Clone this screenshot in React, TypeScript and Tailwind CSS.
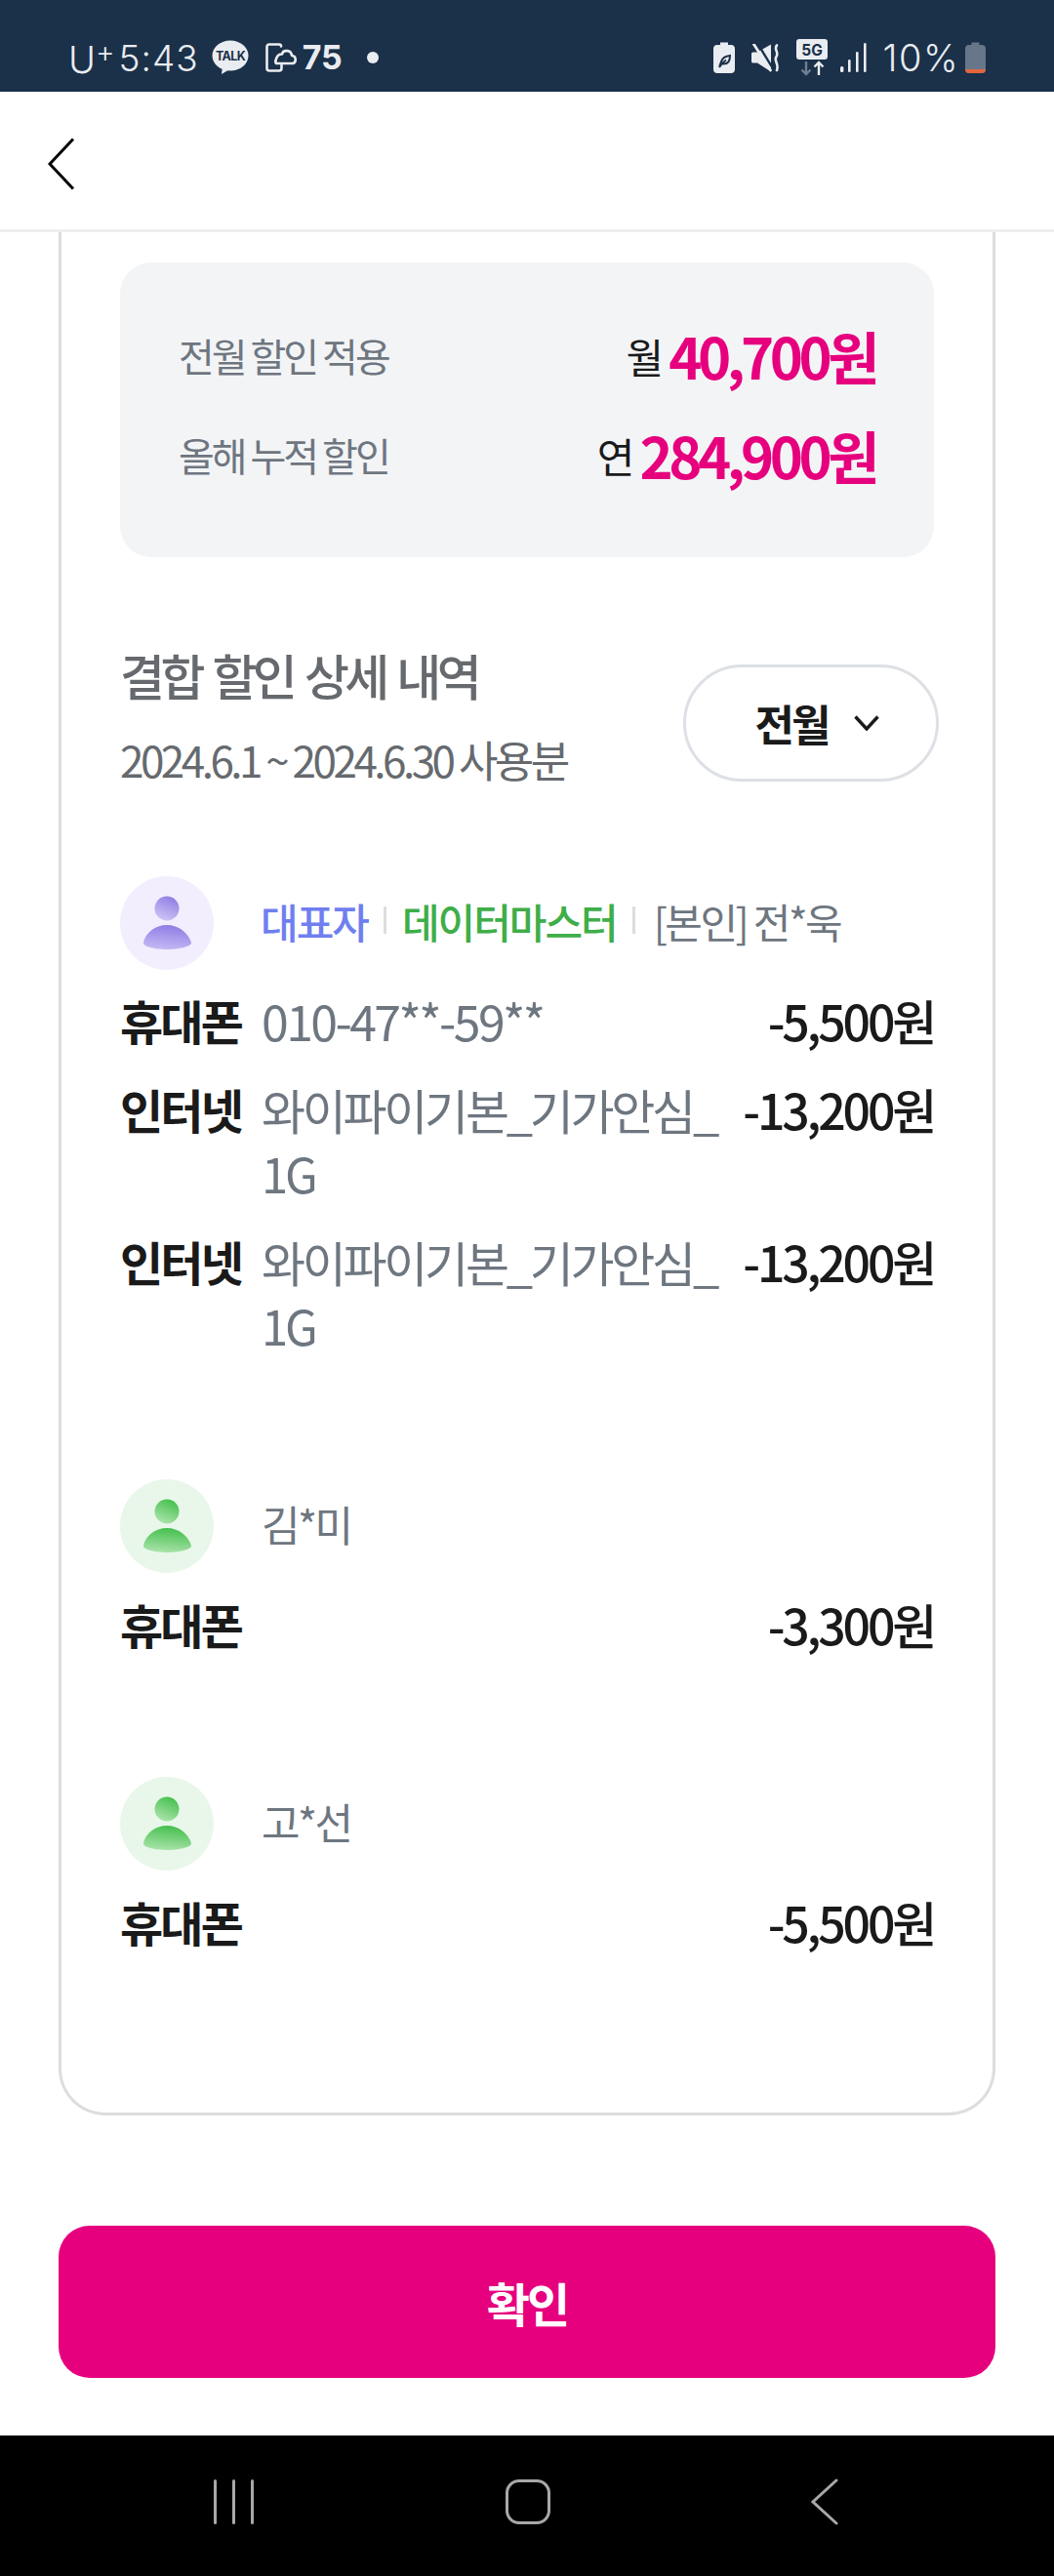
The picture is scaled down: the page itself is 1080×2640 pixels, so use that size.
const sans = 'font-["Noto_Sans_CJK_KR","Noto_Sans",sans-serif]';

function StatusLeft() {
  return (
    <div className="flex items-center">
      <span className='font-["Inter",sans-serif] text-[38px] leading-none font-light text-[#e9ecf0]'>
        U<span className="text-[30px] align-[11px]">+</span>
      </span>
      <span className='ml-[4px] font-["Inter",sans-serif] text-[37px] leading-none font-light text-[#e9ecf0] tracking-[1px]'>5:43</span>
      <svg className="ml-[13px]" width="38" height="36" viewBox="0 0 38 36">
        <ellipse cx="19" cy="16" rx="18.5" ry="15.5" fill="#e9ecf0" />
        <path d="M11 27 L10 35 L20 29 Z" fill="#e9ecf0" />
        <text x="19" y="21" textAnchor="middle" fontFamily="Inter" fontWeight="700" fontSize="12.5" letterSpacing="-0.6" fill="#1b3049">TALK</text>
      </svg>
      <svg className="ml-[17px]" width="32" height="30" viewBox="0 0 32 30" fill="none" stroke="#e9ecf0" strokeWidth="2.6" strokeLinecap="round" strokeLinejoin="round">
        <path d="M16 3.5 V3 C16 2 15 1.5 14 1.5 H4 C2.5 1.5 1.5 2.5 1.5 4 V26 C1.5 27.5 2.5 28.5 4 28.5 H14 C15.5 28.5 16.5 27.5 16.5 26 V22.5" />
        <path d="M11 21 H27 C32 21 32 13.5 27 13 C26.5 7 18 6.5 17 11.5 C11 11 9.5 20 11 21 Z" />
      </svg>
      <span className='ml-[6px] font-["Inter",sans-serif] text-[34px] leading-none font-bold text-[#e9ecf0]'>75</span>
      <span className="ml-[25px] w-[12px] h-[12px] rounded-full bg-[#e9ecf0]" />
    </div>
  );
}

function StatusRight() {
  return (
    <div className="flex items-center">
      <svg width="22" height="32" viewBox="0 0 22 32">
        <path d="M7 0.5 H15 V3 H18 C20.5 3 22 4.5 22 7 V28 C22 30.5 20.5 32 18 32 H4 C1.5 32 0 30.5 0 28 V7 C0 4.5 1.5 3 4 3 H7 Z" fill="#e9ecf0" />
        <path d="M6 25 C7 24 7.5 21 8.5 19 C10 15.5 13 14.5 17 14 C17 19 15.5 23 9.5 22.5 M6 26 C7 24 9 21 13 18.5" fill="none" stroke="#1b3049" strokeWidth="2" />
      </svg>
      <svg className="ml-[17px]" width="29" height="29" viewBox="0 0 29 29" fill="none">
        <path d="M0 10 C0 9 1 8.5 2 8.5 H6 L20 0.5 V28.5 L6 19.5 H2 C1 19.5 0 19 0 18 Z" fill="#e9ecf0" />
        <path d="M6 -1 L23 27" stroke="#1b3049" strokeWidth="2.4" />
        <path d="M2.5 0.5 L19.5 27" stroke="#e9ecf0" strokeWidth="2.8" strokeLinecap="round" />
        <path d="M26 1.5 C22.5 5 28.5 9 25.5 13 C22.5 17 28.5 20 26 27" stroke="#e9ecf0" strokeWidth="2.6" strokeLinecap="round" />
      </svg>
      <svg className="ml-[16px]" width="34" height="38" viewBox="0 0 34 38" fill="none">
        <rect x="1" y="0" width="32" height="21" rx="3" fill="#e9ecf0" />
        <text x="17" y="16.5" textAnchor="middle" fontFamily="Inter" fontWeight="700" fontSize="15.5" fill="#1b3049">5G</text>
        <path d="M11 23 V36 M6.5 31.5 L11 36 L15.5 31.5" stroke="#6f7f92" strokeWidth="2.4" />
        <path d="M24 37 V24 M19.5 28.5 L24 24 L28.5 28.5" stroke="#e9ecf0" strokeWidth="2.4" />
      </svg>
      <svg className="ml-[12px]" width="27" height="30" viewBox="0 0 27 30" fill="#e9ecf0">
        <rect x="0" y="24" width="3.4" height="6" rx="1.5" />
        <rect x="8" y="17" width="2.6" height="13" rx="1.2" />
        <rect x="16" y="9" width="2.6" height="21" rx="1.2" />
        <rect x="24" y="0" width="2.6" height="30" rx="1.2" />
      </svg>
      <span className='ml-[16px] font-["Inter",sans-serif] text-[38px] leading-none font-light text-[#e9ecf0] tracking-[1.5px]'>10%</span>
      <svg className="ml-[6px]" width="21" height="32" viewBox="0 0 21 32">
        <path d="M6.5 0.5 H14.5 V3 H17 C19.5 3 21 4.5 21 7 V28 C21 30.5 19.5 32 17 32 H4 C1.5 32 0 30.5 0 28 V7 C0 4.5 1.5 3 4 3 H6.5 Z" fill="#68768a" />
        <path d="M0 28 H21 C21 30.5 19.5 32 17 32 H4 C1.5 32 0 30.5 0 28 Z" fill="#e2653f" />
      </svg>
    </div>
  );
}

function PersonIcon({ tone }: { tone: "purple" | "green" }) {
  const purple = tone === "purple";
  const id = purple ? "p" : "g";
  return (
    <div className={`w-[96px] h-[96px] rounded-full shrink-0 ${purple ? "bg-[#f3eefe]" : "bg-[#e9f7ea]"}`}>
      <svg width="96" height="96" viewBox="0 0 96 96">
        <defs>
          <linearGradient id={`${id}h`} x1="0.7" y1="0" x2="0.3" y2="1">
            <stop offset="0" stopColor={purple ? "#8f7ce4" : "#43bf4c"} />
            <stop offset="1" stopColor={purple ? "#cfc6f6" : "#aee5ae"} />
          </linearGradient>
          <linearGradient id={`${id}b`} x1="0.6" y1="0" x2="0.4" y2="1">
            <stop offset="0" stopColor={purple ? "#8f7ce4" : "#43bf4c"} />
            <stop offset="1" stopColor={purple ? "#c4b9f4" : "#a9e3aa"} />
          </linearGradient>
        </defs>
        <ellipse cx="48" cy="33" rx="12.5" ry="12.5" fill={`url(#${id}h)`} />
        <path d="M48 50 C60 50 70 58 73 68 C73.5 72 60 75 48 75 C36 75 23 72 24 68 C26 58 36 50 48 50 Z" fill={`url(#${id}b)`} />
      </svg>
    </div>
  );
}

function Row({ label, value, amount, numeric }: { label: string; value?: string; amount: string; numeric?: boolean }) {
  return (
    <div className={`flex items-start justify-between leading-[65px] ${sans}`}>
      <div className="flex min-w-0">
        <span className="w-[145px] shrink-0 text-[48px] font-bold text-[#1a1a1a] tracking-[-2.8px]">{label}</span>
        {value && (
          <span className={`text-[#6e7680] whitespace-pre-line ${numeric ? "text-[50px] tracking-[-2.6px]" : "text-[49px] tracking-[-3.3px]"}`}>
            {value}
          </span>
        )}
      </div>
      <span className="shrink-0 text-[50px] font-medium text-[#1a1a1a] tracking-[-3.2px]">{amount}</span>
    </div>
  );
}

function SavingRow({ label, unit, amount }: { label: string; unit: string; amount: string }) {
  return (
    <div className={`flex items-center justify-between h-[102px] ${sans}`}>
      <span className="text-[40px] text-[#6e7680] tracking-[-3px]">{label}</span>
      <span className="flex items-center">
        <span className="text-[42px] text-[#1a1a1a] tracking-[-2px]">{unit}</span>
        <span className="ml-[7px] text-[58px] font-bold text-[#e6007e] tracking-[-4.5px]">{amount}</span>
      </span>
    </div>
  );
}

function Member({ name, amount }: { name: string; amount: string }) {
  return (
    <section>
      <div className="flex items-center gap-[49px] mb-[20px]">
        <PersonIcon tone="green" />
        <span className={`pb-[6px] text-[43px] text-[#6e7680] tracking-[-2.6px] ${sans}`}>{name}</span>
      </div>
      <Row label="휴대폰" amount={amount} />
    </section>
  );
}

export default function App() {
  return (
    <div className="w-[1080px] h-[2640px] flex flex-col bg-white overflow-hidden">
      {/* Status bar */}
      <div className="h-[94px] shrink-0 bg-[#1b3049] flex items-center justify-between pl-[70px] pr-[70px] pt-[24px]">
        <StatusLeft />
        <StatusRight />
      </div>

      {/* Header */}
      <header className="h-[144px] shrink-0 border-b-[3px] border-[#eeeeee] flex items-center pl-[49px] pt-[6px]">
        <svg width="28" height="54" viewBox="0 0 28 54" fill="none" stroke="#000" strokeWidth="3">
          <path d="M26 1.5 L2 27 L26 52.5" />
        </svg>
      </header>

      {/* Discount card, top is scrolled away */}
      <main className="flex-1 flex flex-col px-[60px]">
        <div className="h-[1930px] shrink-0 border-x-[3px] border-b-[3px] border-[#dddddd] rounded-b-[48px] pt-[31px] pl-[60px] pr-[60px]">
          <div className="h-[302px] rounded-[32px] bg-[#f3f4f6] px-[60px] pt-[44px]">
            <SavingRow label="전월 할인 적용" unit="월" amount="40,700원" />
            <SavingRow label="올해 누적 할인" unit="연" amount="284,900원" />
          </div>

          <div className={`mt-[87px] flex items-start justify-between ${sans}`}>
            <div>
              <h2 className="text-[50px] leading-[66px] font-medium text-[#666a6e] tracking-[-4.6px] [word-spacing:5px]">결합 할인 상세 내역</h2>
              <p className="mt-[25px] text-[44px] leading-[58px] text-[#666a6e] tracking-[-3.5px]">2024.6.1 ~ 2024.6.30 사용분</p>
            </div>
            <button className="-mr-[5px] mt-[23px] w-[262px] h-[120px] rounded-full border-[3px] border-[#dde0e5] flex items-center justify-center gap-[27px] pl-[13px] text-[44px] font-bold text-[#1a1a1a] tracking-[-3px]">
              전월
              <svg width="26" height="16" viewBox="0 0 26 16" fill="none" stroke="#1a1a1a" strokeWidth="3.4">
                <path d="M1.5 1.5 L13 14 L24.5 1.5" />
              </svg>
            </button>
          </div>

          <section className="mt-[91px]">
            <div className="flex items-center mb-[19px]">
              <PersonIcon tone="purple" />
              <div className={`ml-[48px] pb-[6px] flex items-center text-[42px] tracking-[-2px] ${sans}`}>
                <span className="font-medium text-[#6f7ff0]">대표자</span>
                <span className="mx-[16px] w-[3px] h-[28px] bg-[#dddddd]" />
                <span className="font-medium text-[#3fae49]">데이터마스터</span>
                <span className="ml-[16px] mr-[19px] w-[3px] h-[28px] bg-[#dddddd]" />
                <span className="text-[#6e7680] tracking-[-2.6px]">[본인] 전*욱</span>
              </div>
            </div>
            <div className="flex flex-col gap-[26px]">
              <Row label="휴대폰" value="010-47**-59**" amount="-5,500원" numeric />
              <Row label="인터넷" value={"와이파이기본_기가안심_\n1G"} amount="-13,200원" />
              <Row label="인터넷" value={"와이파이기본_기가안심_\n1G"} amount="-13,200원" />
            </div>
          </section>

          <div className="mt-[126px] flex flex-col gap-[124px]">
            <Member name="김*미" amount="-3,300원" />
            <Member name="고*선" amount="-5,500원" />
          </div>
        </div>

        <button className={`mt-[113px] h-[156px] shrink-0 rounded-[32px] bg-[#e6007e] text-white text-[48px] font-bold tracking-[-3px] ${sans}`}>
          확인
        </button>
      </main>

      {/* Android nav bar */}
      <nav className="h-[144px] shrink-0 bg-black">
        <div className="h-full flex items-start pt-[45px]">
          <div className="ml-[219px] flex gap-[16px]">
            <span className="w-[3px] h-[46px] rounded-full bg-[#a8a8a8]" />
            <span className="w-[3px] h-[46px] rounded-full bg-[#a8a8a8]" />
            <span className="w-[3px] h-[46px] rounded-full bg-[#a8a8a8]" />
          </div>
          <span className="ml-[258px] w-[46px] h-[46px] rounded-[14px] border-[3px] border-[#a8a8a8]" />
          <svg className="ml-[267px] -mt-[1px]" width="28" height="48" viewBox="0 0 28 48" fill="none" stroke="#a8a8a8" strokeWidth="3" strokeLinecap="round">
            <path d="M26 2 L2 24 L26 46" />
          </svg>
        </div>
      </nav>
    </div>
  );
}
